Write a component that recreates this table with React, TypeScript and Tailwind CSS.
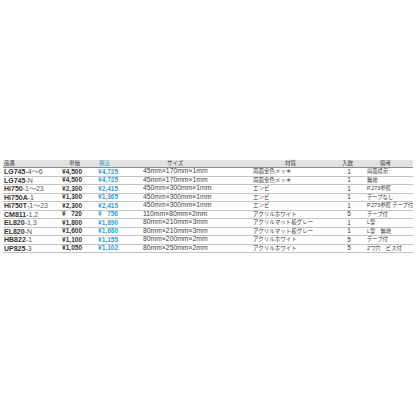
import React from "react";

const rows = [
  { b: "LG745", s: "-4～6", p: "¥4,500", t: "¥4,725", size: "45mm×170mm×1mm", mat: "両面金色メッキ", n: "1", note: "両面標示" },
  { b: "LG745", s: "-N", p: "¥4,500", t: "¥4,725", size: "45mm×170mm×1mm", mat: "両面金色メッキ", n: "1", note: "無地" },
  { b: "Hi750", s: "-1～23", p: "¥2,300", t: "¥2,415", size: "450mm×300mm×1mm", mat: "エンビ", n: "1", note: "P.273参照" },
  { b: "Hi750A", s: "-1", p: "¥1,300", t: "¥1,365", size: "450mm×300mm×1mm", mat: "エンビ", n: "1", note: "テープなし" },
  { b: "Hi750T", s: "-1～23", p: "¥2,300", t: "¥2,415", size: "450mm×300mm×1mm", mat: "エンビ", n: "1", note: "P.273参照 テープ付" },
  { b: "CM811", s: "-1,2", p: "¥ 720", t: "¥ 756", size: "110mm×80mm×2mm", mat: "アクリルホワイト", n: "5", note: "テープ付" },
  { b: "EL820", s: "-1,3", p: "¥1,800", t: "¥1,890", size: "80mm×210mm×3mm", mat: "アクリルマット板グレー", n: "1", note: "L型" },
  { b: "EL820", s: "-N", p: "¥1,600", t: "¥1,680", size: "80mm×210mm×3mm", mat: "アクリルマット板グレー", n: "1", note: "L型　無地" },
  { b: "HB822", s: "-1", p: "¥1,100", t: "¥1,155", size: "80mm×200mm×2mm", mat: "アクリルホワイト", n: "5", note: "テープ付" },
  { b: "UP825", s: "-3", p: "¥1,050", t: "¥1,102", size: "80mm×250mm×2mm", mat: "アクリルホワイト", n: "5", note: "2つ穴　ビス付" },
];

const grid = "grid grid-cols-[57px_24px_34px_132px_90px_18px_55px]";

function Price({ v, blue }: { v: string; blue?: boolean }) {
  const sp = v.startsWith("¥ ");
  const cls = blue ? "text-[#2a9fd8]" : "text-[#333]";
  return (
    <div className={`text-right font-bold whitespace-nowrap ${cls}`}>
      {sp ? (
        <>
          <span>¥</span>
          <span className="invisible">0,</span>
          <span>{v.slice(2)}</span>
        </>
      ) : (
        v
      )}
    </div>
  );
}

export default function App() {
  return (
    <div className="w-[416px] h-[416px] bg-white" style={{ fontFamily: '"Liberation Sans", "Noto Sans CJK JP", sans-serif' }}>
      <div className="pt-[160px] pl-[3px] w-[413px]">
        <div className={`${grid} h-[8px] items-center bg-[#e2e2e2] border-b border-[#8a8a8a] text-[5.5px] leading-none text-[#444]`}>
          <div className="pl-[1px]">品番</div>
          <div className="pl-[9px]">単価</div>
          <div className="pl-[15px] text-[#2a9fd8]">税込</div>
          <div className="pl-[49px]">サイズ</div>
          <div className="pl-[35px]">材質</div>
          <div className="pl-[2px]">入数</div>
          <div className="pl-[22px]">備考</div>
        </div>
        {rows.map((r, i) => (
          <div key={i} className={`${grid} h-[8.5px] items-center border-b border-[#c4c4c4] text-[6.5px] leading-none text-[#333]`}>
            <div className="pl-[1px] whitespace-nowrap text-[7px]">
              <span className="font-bold">{r.b}</span>
              <span className="text-[#555]">{r.s}</span>
            </div>
            <div className="pr-[2px]"><Price v={r.p} /></div>
            <div><Price v={r.t} blue /></div>
            <div className="pl-[25px] whitespace-nowrap text-[6.8px] text-[#444]">{r.size}</div>
            <div className="pl-[3px] whitespace-nowrap text-[5.5px]">{r.mat}</div>
            <div className="text-center text-[6.5px]">{r.n}</div>
            <div className="pl-[9px] whitespace-nowrap text-[5.3px]">{r.note}</div>
          </div>
        ))}
      </div>
    </div>
  );
}
